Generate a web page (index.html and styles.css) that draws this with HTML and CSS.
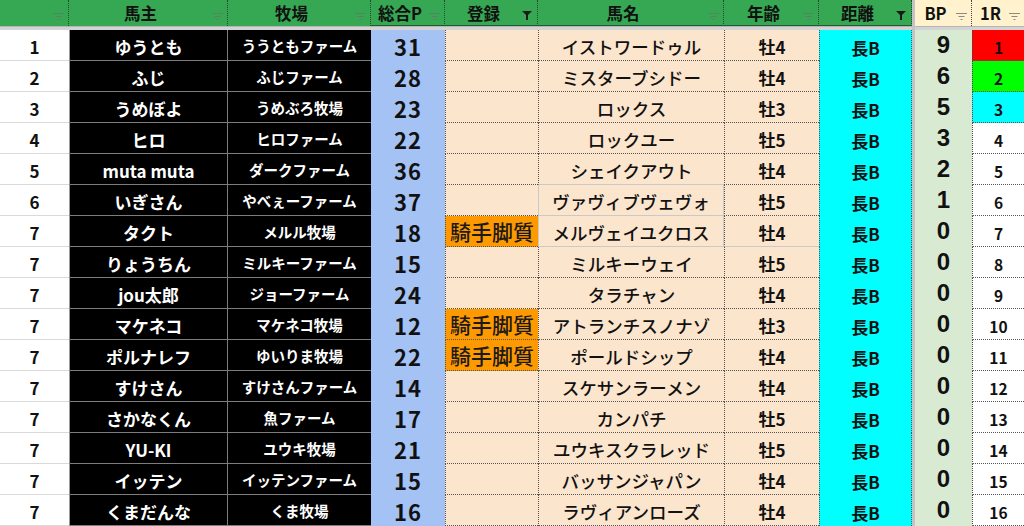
FILE: index.html
```html
<!DOCTYPE html>
<html lang="ja">
<head>
<meta charset="utf-8">
<title>Sheet</title>
<link rel="stylesheet" href="styles.css">
</head>
<body>
<div class="sheet">
  <div class="row head">
    <div class="h h-a"><span class="ht"></span><svg class="fi" width="11" height="7" viewBox="0 0 11 7"><path d="M0 .5h11M2.5 3.5h6M4.5 6.5h2" stroke="#5d7f66"/></svg></div>
    <div class="h"><span class="ht">馬主</span><svg class="fi" width="11" height="7" viewBox="0 0 11 7"><path d="M0 .5h11M2.5 3.5h6M4.5 6.5h2" stroke="#5d7f66"/></svg></div>
    <div class="h"><span class="ht">牧場</span><svg class="fi" width="11" height="7" viewBox="0 0 11 7"><path d="M0 .5h11M2.5 3.5h6M4.5 6.5h2" stroke="#5d7f66"/></svg></div>
    <div class="h h-t"><span class="ht">総合P</span><svg class="fi" width="11" height="7" viewBox="0 0 11 7"><path d="M0 .5h11M2.5 3.5h6M4.5 6.5h2" stroke="#5d7f66"/></svg></div>
    <div class="h h-t"><span class="ht">登録</span><svg class="fa" width="10" height="10" viewBox="0 0 10 10"><path d="M0 1h10L6 5v5H4V5z" fill="#1a1a1a"/></svg></div>
    <div class="h h-t"><span class="ht">馬名</span><svg class="fi" width="11" height="7" viewBox="0 0 11 7"><path d="M0 .5h11M2.5 3.5h6M4.5 6.5h2" stroke="#5d7f66"/></svg></div>
    <div class="h h-t"><span class="ht">年齢</span><svg class="fi" width="11" height="7" viewBox="0 0 11 7"><path d="M0 .5h11M2.5 3.5h6M4.5 6.5h2" stroke="#5d7f66"/></svg></div>
    <div class="h h-t"><span class="ht">距離</span><svg class="fa" width="10" height="10" viewBox="0 0 10 10"><path d="M0 1h10L6 5v5H4V5z" fill="#1a1a1a"/></svg></div>
    <div class="gap"></div>
    <div class="h h-c"><span class="ht">BP</span><svg class="fi" width="11" height="7" viewBox="0 0 11 7"><path d="M0 .5h11M2.5 3.5h6M4.5 6.5h2" stroke="#8a8a8a"/></svg></div>
    <div class="h h-c h-r"><span class="ht">1R</span><svg class="fi" width="11" height="7" viewBox="0 0 11 7"><path d="M0 .5h11M2.5 3.5h6M4.5 6.5h2" stroke="#8a8a8a"/></svg></div>
  </div>
  <div class="freeze"><div class="fz-l"></div><div class="gap"></div><div class="fz-r"></div></div>

  <div class="row"><div class="c rk">1</div><div class="c ow">ゆうとも</div><div class="c fm">ううともファーム</div><div class="c tp">31</div><div class="c rg"></div><div class="c hn">イストワードゥル</div><div class="c ag">牡4</div><div class="c ds">長B</div><div class="gap"></div><div class="c bp">9</div><div class="c r1 red">1</div></div>
  <div class="row"><div class="c rk">2</div><div class="c ow">ふじ</div><div class="c fm">ふじファーム</div><div class="c tp">28</div><div class="c rg"></div><div class="c hn">ミスターブシドー</div><div class="c ag">牡4</div><div class="c ds">長B</div><div class="gap"></div><div class="c bp">6</div><div class="c r1 grn">2</div></div>
  <div class="row"><div class="c rk">3</div><div class="c ow">うめぼよ</div><div class="c fm">うめぶろ牧場</div><div class="c tp">23</div><div class="c rg"></div><div class="c hn">ロックス</div><div class="c ag">牡3</div><div class="c ds">長B</div><div class="gap"></div><div class="c bp">5</div><div class="c r1 cyn">3</div></div>
  <div class="row"><div class="c rk">4</div><div class="c ow">ヒロ</div><div class="c fm">ヒロファーム</div><div class="c tp">22</div><div class="c rg"></div><div class="c hn">ロックユー</div><div class="c ag">牡5</div><div class="c ds">長B</div><div class="gap"></div><div class="c bp">3</div><div class="c r1">4</div></div>
  <div class="row"><div class="c rk">5</div><div class="c ow">muta muta</div><div class="c fm">ダークファーム</div><div class="c tp">36</div><div class="c rg"></div><div class="c hn sel-b">シェイクアウト</div><div class="c ag">牡4</div><div class="c ds">長B</div><div class="gap"></div><div class="c bp">2</div><div class="c r1">5</div></div>
  <div class="row"><div class="c rk">6</div><div class="c ow">いぎさん</div><div class="c fm">やべぇーファーム</div><div class="c tp">37</div><div class="c rg"></div><div class="c hn sel">ヴァヴィブヴェヴォ</div><div class="c ag">牡5</div><div class="c ds">長B</div><div class="gap"></div><div class="c bp">1</div><div class="c r1">6</div></div>
  <div class="row"><div class="c rk">7</div><div class="c ow">タクト</div><div class="c fm">メルル牧場</div><div class="c tp">18</div><div class="c rg or">騎手脚質</div><div class="c hn sel">メルヴェイユクロス</div><div class="c ag sel-b">牡4</div><div class="c ds">長B</div><div class="gap"></div><div class="c bp">0</div><div class="c r1">7</div></div>
  <div class="row"><div class="c rk">7</div><div class="c ow">りょうちん</div><div class="c fm">ミルキーファーム</div><div class="c tp">15</div><div class="c rg"></div><div class="c hn">ミルキーウェイ</div><div class="c ag">牡5</div><div class="c ds">長B</div><div class="gap"></div><div class="c bp">0</div><div class="c r1">8</div></div>
  <div class="row"><div class="c rk">7</div><div class="c ow">jou太郎</div><div class="c fm">ジョーファーム</div><div class="c tp">24</div><div class="c rg"></div><div class="c hn">タラチャン</div><div class="c ag">牡4</div><div class="c ds">長B</div><div class="gap"></div><div class="c bp">0</div><div class="c r1">9</div></div>
  <div class="row"><div class="c rk">7</div><div class="c ow">マケネコ</div><div class="c fm">マケネコ牧場</div><div class="c tp">12</div><div class="c rg or">騎手脚質</div><div class="c hn">アトランチスノナゾ</div><div class="c ag">牡3</div><div class="c ds">長B</div><div class="gap"></div><div class="c bp">0</div><div class="c r1">10</div></div>
  <div class="row"><div class="c rk">7</div><div class="c ow">ポルナレフ</div><div class="c fm">ゆいりま牧場</div><div class="c tp">22</div><div class="c rg or">騎手脚質</div><div class="c hn">ポールドシップ</div><div class="c ag">牡4</div><div class="c ds">長B</div><div class="gap"></div><div class="c bp">0</div><div class="c r1">11</div></div>
  <div class="row"><div class="c rk">7</div><div class="c ow">すけさん</div><div class="c fm">すけさんファーム</div><div class="c tp">14</div><div class="c rg"></div><div class="c hn">スケサンラーメン</div><div class="c ag">牡4</div><div class="c ds">長B</div><div class="gap"></div><div class="c bp">0</div><div class="c r1">12</div></div>
  <div class="row"><div class="c rk">7</div><div class="c ow">さかなくん</div><div class="c fm">魚ファーム</div><div class="c tp">17</div><div class="c rg"></div><div class="c hn">カンパチ</div><div class="c ag">牡5</div><div class="c ds">長B</div><div class="gap"></div><div class="c bp">0</div><div class="c r1">13</div></div>
  <div class="row"><div class="c rk">7</div><div class="c ow">YU-KI</div><div class="c fm">ユウキ牧場</div><div class="c tp">21</div><div class="c rg"></div><div class="c hn">ユウキスクラレッド</div><div class="c ag">牡5</div><div class="c ds">長B</div><div class="gap"></div><div class="c bp">0</div><div class="c r1">14</div></div>
  <div class="row"><div class="c rk">7</div><div class="c ow">イッテン</div><div class="c fm">イッテンファーム</div><div class="c tp">15</div><div class="c rg"></div><div class="c hn">バッサンジャパン</div><div class="c ag">牡4</div><div class="c ds">長B</div><div class="gap"></div><div class="c bp">0</div><div class="c r1">15</div></div>
  <div class="row"><div class="c rk">7</div><div class="c ow">くまだんな</div><div class="c fm">くま牧場</div><div class="c tp">16</div><div class="c rg"></div><div class="c hn">ラヴィアンローズ</div><div class="c ag">牡4</div><div class="c ds">長B</div><div class="gap"></div><div class="c bp">0</div><div class="c r1">16</div></div>
</div>
</body>
</html>
```

FILE: styles.css
```css
* { box-sizing: border-box; }
html, body {
  margin: 0;
  padding: 0;
  background: #fff;
  overflow: hidden;
}
body {
  font-family: "Noto Sans CJK JP", "Noto Sans", sans-serif;
  font-weight: 700;
  color: #111;
  width: 1024px;
  height: 526px;
}
.sheet {
  display: flex;
  flex-direction: column;
  width: 1024px;
}
.row {
  display: grid;
  grid-template-columns: 69px 159px 143px 74px 93px 186px 95px 93px 3px 57px 52px;
  height: 31px;
}
.row.head {
  height: 26px;
}
.gap {
  background: #c4c4c4;
}

/* header */
.h {
  display: flex;
  align-items: center;
  background: #36a853;
  border-right: 1px dotted #1f4d2b;
  padding-right: 4px;
  font-size: 16.5px;
  line-height: 1;
}
.h .ht {
  flex: 1;
  text-align: center;
  padding-top: 1px;
}
.h .fi {
  margin-top: 7px;
  flex: none;
}
.h .fa {
  margin-top: 5px;
  margin-right: 1px;
  flex: none;
}
.h-t {
  border-bottom: 1px solid #1f5a30;
  border-left: 1px dotted #1f4d2b;
  margin-left: -1px;
}
.h-c {
  background: #fff2cc;
  border-right: 1px dotted #444;
}
.h-r {
  border-right: none;
}

.freeze {
  display: grid;
  grid-template-columns: 912px 3px 109px;
  height: 4px;
}
.fz-l, .fz-r {
  background: #d3d3d3;
  border-top: 1px solid #b5b5b5;
}

/* body cells */
.c {
  display: flex;
  align-items: center;
  justify-content: center;
  white-space: nowrap;
  line-height: 1;
  padding-top: 3px;
}
.rk {
  font-size: 17px;
  border-bottom: 1px solid #dadada;
}
.ow {
  background: #000;
  color: #fff;
  font-size: 17px;
  border-bottom: 1px solid #7d7d7d;
  border-right: 1px solid #7d7d7d;
  border-left: 1px solid #9a9a9a;
}
.fm {
  background: #000;
  color: #fff;
  font-size: 14.5px;
  border-bottom: 1px solid #7d7d7d;
}
.tp {
  background: #a4c2f4;
  font-size: 22px;
  letter-spacing: 1px;
  padding-top: 1px;
}
.rg {
  background: #fce5cd;
  border-left: 1px dotted #555;
  border-bottom: 1px dotted #555;
}
.rg.or {
  background: #ff9900;
  font-size: 21px;
  font-weight: 500;
  color: #1a1a1a;
  padding-top: 0;
}
.hn {
  background: #fce5cd;
  font-size: 17.5px;
  font-weight: 500;
  border-left: 1px dotted #555;
  border-bottom: 1px dotted #555;
}
.hn.sel {
  border-left: 1px solid #c9c9c9;
  border-bottom: 1px solid #c9c9c9;
  border-right: 1px solid #c9c9c9;
}
.hn.sel-b {
  border-bottom: 1px solid #c9c9c9;
}
.ag {
  background: #fce5cd;
  font-size: 17px;
  border-left: 1px dotted #555;
  border-bottom: 1px dotted #555;
}
.ag.sel-b {
  border-bottom: 1px solid #c9c9c9;
}
.ds {
  background: #00ffff;
  font-size: 17px;
  border-left: 1px dotted #555;
  border-right: 1px dotted #555;
}
.bp {
  background: #d9ead3;
  font-family: "Liberation Sans", Arial, sans-serif;
  font-size: 24px;
  font-weight: 700;
  padding-top: 0;
  padding-bottom: 2px;
}
.r1 {
  background: #fff;
  font-size: 15.5px;
  font-weight: 700;
  border-left: 1px dotted #444;
  border-bottom: 1px dotted #555;
  padding-top: 6px;
}
.r1.red { background: #ff0000; }
.r1.grn { background: #00ff00; }
.r1.cyn { background: #00ffff; }
```
